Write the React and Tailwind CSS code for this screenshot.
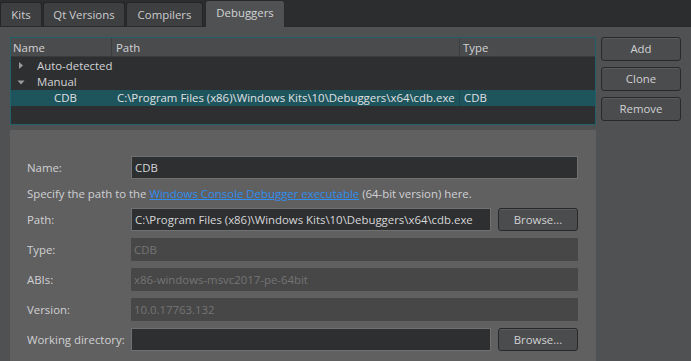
import React from "react";

const font = { fontFamily: '"Open Sans", "Noto Sans", sans-serif' };

function Tab({ label, active, className = "" }) {
  if (active) {
    return (
      <div className={"h-[27px] -mb-px flex items-center justify-center bg-[#505153] border border-b-0 border-[#2a2a2b] rounded-t-[3px] text-[#d2d3d5] relative z-10 " + className}>
        <span className="-mt-[2px]">{label}</span>
      </div>
    );
  }
  return (
    <div className={"h-[24px] flex items-center justify-center bg-[#3e3f41] border border-b-0 border-[#252527] rounded-t-[3px] text-[#cccdcf] " + className}>
      {label}
    </div>
  );
}

function Btn({ children, className = "" }) {
  return (
    <div
      className={
        "h-[24px] flex items-center justify-center rounded-[3px] border border-[#29292a] bg-[#4b4c4e] text-[#d0d1d3] shadow-[inset_0_1px_0_#5a5b5d] " +
        className
      }
    >
      {children}
    </div>
  );
}

function Field({ label, children }) {
  return (
    <div className="flex items-center h-[23px]">
      <div className="w-[104px] shrink-0 text-[#d0d1d3] whitespace-nowrap">{label}</div>
      {children}
    </div>
  );
}

function Input({ value, disabled, className = "" }) {
  if (disabled) {
    return (
      <div className={"h-[23px] flex items-center px-[3px] bg-[#474747] text-[#747474] rounded-[1px] " + className}>
        {value}
      </div>
    );
  }
  return (
    <div className={"h-[23px] flex items-center px-[3px] bg-[#2e2f31] border border-[#6f7072] text-[#d6d7d9] " + className}>
      {value}
    </div>
  );
}

function TriRight() {
  return (
    <svg width="8" height="9" viewBox="0 0 8 9" className="shrink-0">
      <path d="M2 1 L6 4.5 L2 8 Z" fill="#9a9b9d" />
    </svg>
  );
}
function TriDown() {
  return (
    <svg width="8" height="9" viewBox="0 0 8 9" className="shrink-0">
      <path d="M0.5 2.5 L7.5 2.5 L4 6.5 Z" fill="#9a9b9d" />
    </svg>
  );
}

export default function App() {
  return (
    <div
      className="w-[691px] h-[361px] overflow-hidden bg-[#2c2d2f] flex flex-col text-[11.4px] leading-none"
      style={font}
    >
      {/* tab bar */}
      <div className="h-[26px] flex items-end shrink-0">
        <Tab label="Kits" className="w-[42px]" />
        <Tab label="Qt Versions" className="ml-[1px] w-[82px]" />
        <Tab label="Compilers" className="ml-[1px] w-[77px]" />
        <Tab label="Debuggers" active className="ml-[2px] w-[80px]" />
      </div>

      {/* pane */}
      <div className="flex-1 bg-[#505153] border-t border-[#2a2a2b] pl-[10px] pr-[10px] pt-[10px] flex flex-col min-h-0">
        <div className="flex gap-[5px]">
          {/* table */}
          <div className="w-[586px] h-[88px] border border-[#22606a] bg-[#2e2f31] flex flex-col">
            <div className="h-[19px] flex bg-[#4a4b4d] border-b border-[#3a3b3d] text-[#d2d3d5]">
              <div className="w-[101px] pl-[2px] flex items-center pt-[1px] border-r border-[#3c3d3f]">Name</div>
              <div className="w-[348px] pl-[4px] flex items-center pt-[1px] border-r border-[#3c3d3f]">Path</div>
              <div className="flex-1 pl-[3px] flex items-center pt-[1px]">Type</div>
            </div>
            <div className="h-[17px] flex items-center pl-[6px] gap-[12px] text-[#d2d3d5]">
              <TriRight />
              <span>Auto-detected</span>
            </div>
            <div className="h-[16px] flex items-center pl-[6px] gap-[12px] text-[#d2d3d5]">
              <TriDown />
              <span>Manual</span>
            </div>
            <div className="h-[16px] flex items-center bg-[#1e545c] text-[#e0e1e3]">
              <div className="w-[101px] pl-[43px]">CDB</div>
              <div className="w-[348px] pl-[5px] whitespace-nowrap border-r border-[#1a4950] h-full flex items-center">
                C:\Program Files (x86)\Windows Kits\10\Debuggers\x64\cdb.exe
              </div>
              <div className="flex-1 pl-[4px]">CDB</div>
            </div>
          </div>
          {/* buttons */}
          <div className="flex-1 flex flex-col gap-[6px]">
            <Btn>Add</Btn>
            <Btn>Clone</Btn>
            <Btn>Remove</Btn>
          </div>
        </div>

        {/* details */}
        <div className="mt-[5px] w-[586px] flex-1 bg-[#606061] pl-[17px] pr-[18px] pt-[26px] flex flex-col">
          <Field label="Name:">
            <Input value="CDB" className="flex-1" />
          </Field>
          <div className="h-[29px] flex items-center text-[#d0d1d3] whitespace-nowrap">
            <span>Specify the path to the&nbsp;</span>
            <span className="text-[#2f8ef0] underline">Windows Console Debugger executable</span>
            <span>&nbsp;(64-bit version) here.</span>
          </div>
          <Field label="Path:">
            <Input
              value="C:\Program Files (x86)\Windows Kits\10\Debuggers\x64\cdb.exe"
              className="flex-1 whitespace-nowrap"
            />
            <Btn className="ml-[7px] w-[80px] !h-[23px]">Browse...</Btn>
          </Field>
          <div className="h-[7px]" />
          <Field label="Type:">
            <Input value="CDB" disabled className="flex-1" />
          </Field>
          <div className="h-[7px]" />
          <Field label="ABIs:">
            <Input value="x86-windows-msvc2017-pe-64bit" disabled className="flex-1" />
          </Field>
          <div className="h-[7px]" />
          <Field label="Version:">
            <Input value="10.0.17763.132" disabled className="flex-1" />
          </Field>
          <div className="h-[7px]" />
          <Field label="Working directory:">
            <Input value="" className="flex-1" />
            <Btn className="ml-[7px] w-[80px] !h-[23px]">Browse...</Btn>
          </Field>
        </div>
      </div>
    </div>
  );
}
